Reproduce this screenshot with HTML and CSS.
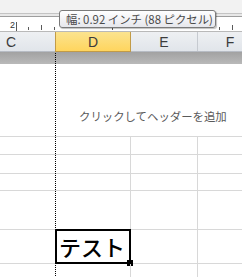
FILE: index.html
```html
<!DOCTYPE html>
<html lang="ja">
<head>
<meta charset="utf-8">
<link rel="stylesheet" href="styles.css">
</head>
<body>
<div class="screen">
  <div class="topbar"></div>
  <div class="rulerlines"></div>
  <div class="ruler">
    <svg class="ruler-svg" width="242" height="14" viewBox="0 0 242 14">
      <text x="10" y="11" class="ruler-num">2</text>
      <line x1="16.5" y1="5" x2="16.5" y2="14" />
      <line x1="28.5" y1="10" x2="28.5" y2="13" />
      <line x1="41.5" y1="8" x2="41.5" y2="13" />
      <line x1="54.5" y1="10" x2="54.5" y2="13" />
      <line x1="112.5" y1="10" x2="112.5" y2="13" />
      <line x1="219.5" y1="10" x2="219.5" y2="13" />
      <line x1="232.5" y1="8" x2="232.5" y2="13" />
    </svg>
  </div>
  <div class="colheads">
    <div class="ch ch-c">C</div>
    <div class="ch ch-d">D</div>
    <div class="ch ch-e">E</div>
    <div class="ch ch-f">F</div>
  </div>
  <div class="band"></div>
  <div class="page-header">
    <span class="header-hint">クリックしてヘッダーを追加</span>
  </div>
  <div class="grid">
    <div class="row r1"><div class="cell c"></div><div class="cell d"></div><div class="cell e"></div><div class="cell f"></div></div>
    <div class="row r2"><div class="cell c"></div><div class="cell d"></div><div class="cell e"></div><div class="cell f"></div></div>
    <div class="row r3"><div class="cell c"></div><div class="cell d"></div><div class="cell e"></div><div class="cell f"></div></div>
    <div class="row r4"><div class="cell c"></div><div class="cell d"></div><div class="cell e"></div><div class="cell f"></div></div>
    <div class="row r5"><div class="cell c"></div><div class="cell d active"><span class="cell-text">テスト</span><div class="selection"><div class="fill-handle"></div></div></div><div class="cell e"></div><div class="cell f"></div></div>
    <div class="row r6"><div class="cell c"></div><div class="cell d"></div><div class="cell e"></div><div class="cell f"></div></div>
  </div>
  <div class="drag-line"></div>
  <div class="tooltip">幅: 0.92 インチ (88 ピクセル)</div>
</div>
</body>
</html>
```
FILE: styles.css
```css
html, body {
  margin: 0;
  padding: 0;
  background: #fff;
}
.screen {
  position: relative;
  width: 242px;
  height: 277px;
  overflow: hidden;
  font-family: "Noto Sans CJK JP", "Noto Sans", sans-serif;
}
.topbar {
  height: 13px;
  background: #f2f2f2;
}
.rulerlines {
  height: 2px;
  border-top: 1px solid #c4c4c4;
  border-bottom: 1px solid #9e9e9e;
  background: #e8e8e8;
}
.ruler {
  height: 14px;
  background: #fff;
  border-bottom: 1px solid #b9b9b9;
}
.ruler-svg {
  display: block;
}
.ruler-svg line {
  stroke: #5a5a5a;
  stroke-width: 1;
}
.ruler-num {
  font-family: "Liberation Sans", sans-serif;
  font-size: 9px;
  fill: #333;
}
.colheads {
  display: flex;
  height: 19px;
  border-bottom: 1px solid #b7bcc4;
  background: linear-gradient(#eef0f3, #e1e5ea);
}
.ch {
  box-sizing: border-box;
  display: flex;
  align-items: center;
  justify-content: center;
  font-family: "Liberation Sans", sans-serif;
  font-size: 14px;
  color: #3b3b3b;
  flex: none;
}
.ch-c {
  width: 88px;
  margin-left: -33px;
}
.ch-d {
  width: 76px;
  border-left: 1px solid #c29b47;
  border-right: 1px solid #c29b47;
  background: linear-gradient(#fbe38f, #ffd55e);
  margin-bottom: -1px;
  height: 20px;
  border-bottom: 1px solid #c29b47;
}
.ch-e {
  width: 67px;
  border-right: 1px solid #c6cad0;
}
.ch-f {
  width: 64px;
}
.band {
  height: 12px;
  background: linear-gradient(#a2a2a2, #b9b9b9);
}
.page-header {
  height: 72px;
  box-sizing: border-box;
  padding: 45px 0 0 79px;
}
.header-hint {
  display: block;
  font-size: 11.4px;
  line-height: 14px;
  color: #5a5a5a;
  white-space: nowrap;
}
.grid {
  border-top: 1px solid #d8d8d8;
}
.row {
  display: flex;
  border-bottom: 1px solid #d8d8d8;
}
.r1 { height: 17px; }
.r2 { height: 18px; }
.r3 { height: 16px; }
.r4 { height: 38px; }
.r5 { height: 33px; }
.r6 { height: 20px; }
.cell {
  flex: none;
  position: relative;
}
.cell.c { width: 55px; }
.cell.d { width: 75px; border-right: 1px solid #d8d8d8; }
.cell.e { width: 66px; border-right: 1px solid #d8d8d8; }
.cell.f { flex: 1; }
.cell-text {
  display: block;
  padding-left: 4px;
  font-size: 22px;
  font-weight: 500;
  line-height: 33px;
  color: #000;
  white-space: nowrap;
}
.selection {
  position: absolute;
  left: 0;
  top: -1px;
  width: 76px;
  height: 35px;
  box-sizing: border-box;
  border: 2px solid #000;
}
.fill-handle {
  position: absolute;
  left: 70px;
  top: 29px;
  width: 6px;
  height: 6px;
  background: #000;
}
.drag-line {
  position: absolute;
  left: 55px;
  top: 53px;
  bottom: 0;
  width: 1px;
  background: repeating-linear-gradient(to bottom, #000 0 1px, transparent 1px 2px);
}
.tooltip {
  position: absolute;
  left: 59px;
  top: 10px;
  width: 157px;
  height: 18px;
  box-sizing: border-box;
  border: 1px solid #7a7a7a;
  border-radius: 3px;
  background: linear-gradient(#ffffff, #e6e7ec);
  box-shadow: 1px 1px 1px rgba(0, 0, 0, 0.25);
  font-size: 11.4px;
  line-height: 16px;
  color: #4a4a4a;
  padding-left: 6px;
  white-space: nowrap;
}
```
